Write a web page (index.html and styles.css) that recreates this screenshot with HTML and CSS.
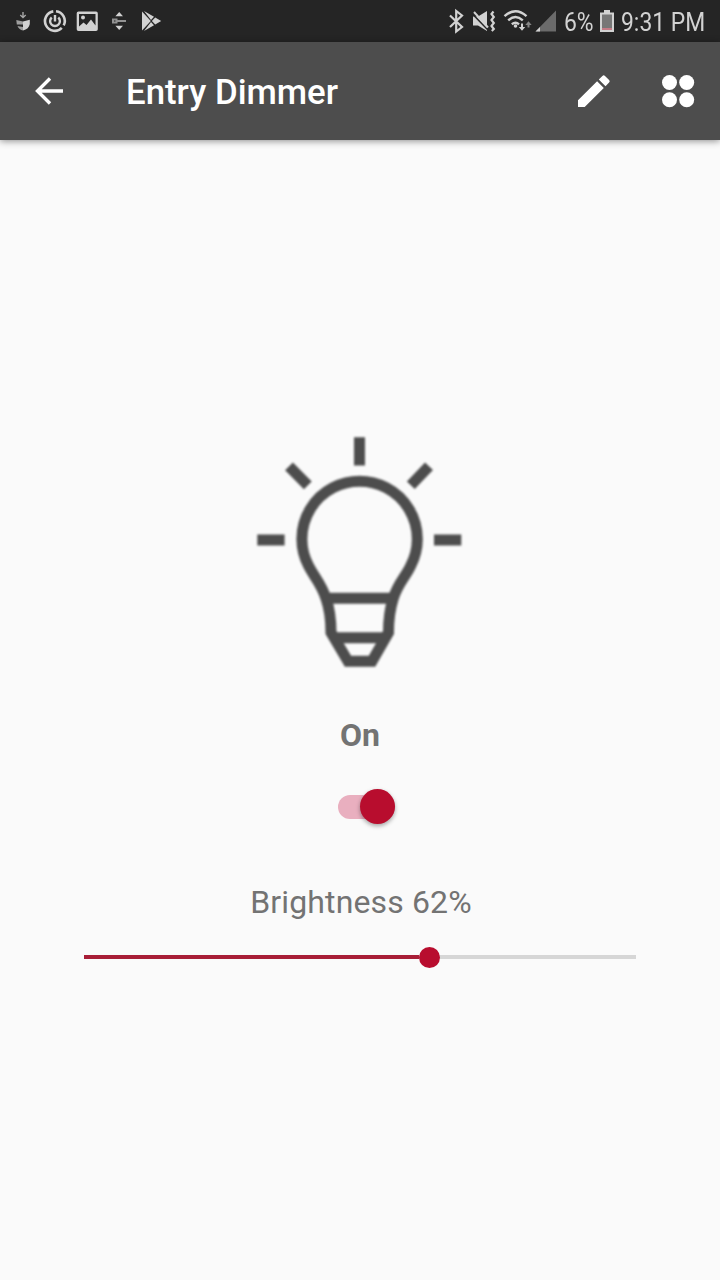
FILE: index.html
```html
<!DOCTYPE html>
<html lang="en">

<head>
    <meta charset="UTF-8">
    <meta name="viewport" content="width=device-width, initial-scale=1.0">
    <title>Entry Dimmer</title>
    <link rel="stylesheet" href="styles.css">
</head>

<body>
    <div class="status-bar">
        <!-- Notifications -->
        <svg class="notifications" width="180" height="42" viewBox="0 0 180 42" fill="#d2d2d2">
            <path d="M22.300 12h1.400v4l1.600-1.400.9 1-3.200 3-3.200-3 .9-1 1.600 1.400z" opacity=".75" />
            <path d="M23 21.500l6.800-1.700v4.200c-.5 3.500-3 5.500-6.800 6.500z" />
            <path d="M16.300 20l6.700 1.500v3h-6.200zM17.500 26l5.500 1v3.500c-2.500-.6-4.500-2-5.500-4.500z" opacity=".7" />
            <path d="M56 11.250a9.800 9.800 0 0 1 7.700 14.200M61.800 27.900a9.800 9.800 0 1 1-8.500-16.550" fill="none" stroke="#d2d2d2" stroke-width="2.600" />
            <path d="M51.700 17.500a4.900 4.900 0 1 0 6.600 0M55 15v6.500" fill="none" stroke="#d2d2d2" stroke-width="2.400" />
            <path fill-rule="evenodd" d="M78.500 11.500h17.500a1.800 1.800 0 0 1 1.800 1.800v15.900a1.800 1.800 0 0 1-1.800 1.800h-17.500a1.800 1.800 0 0 1-1.800-1.800v-15.900a1.800 1.800 0 0 1 1.800-1.800zM79 14v12.500l4.500-4 3 2.500 4.500-5.500 4.500 6v-11.500z" />
            <circle cx="83" cy="17.500" r="2" />
            <path d="M119.200 12l3.800 4.200h-7.600zM119.200 30l3.800-4.200h-7.600z" />
            <path d="M113 19.500h3.500v3h-3.500zM117.500 21h8.500" fill="none" stroke="#929292" stroke-width="2" />
            <path d="M142 11.500l8.800 9.500-8.800 9.500zM144 11l10 5.700-3 3.200zM144 31l10-5.700-3-3.200zM155.200 17.400l6 3.600-6 3.600-3.300-3.600z" />
        </svg>
        <!-- Bluetooth, sound, wifi and signal -->
        <svg class="signals" width="118" height="42" viewBox="442 0 118 42" fill="#d2d2d2">
            <path d="M450 15.500l12 11.500-5.800 4.500v-20.500l5.800 4.500-12 11.500" fill="none" stroke="#d2d2d2" stroke-width="2.200" />
            <path d="M473 16.500h5l9-5.500v20l-9-5.500h-5z" />
            <path d="M472.500 14l15 15.500" stroke="#252525" stroke-width="1.600" />
            <path d="M474 12l14 15.500" stroke="#d2d2d2" stroke-width="2" />
            <path d="M493.500 11.500l-2 2.500 2.300 3-2.300 3 2.300 3-2.300 3 2.300 3-2 2" fill="none" stroke="#d2d2d2" stroke-width="2.200" />
            <path d="M504.500 16.200q11-10 22 0M508.200 20.400q7.300-6.600 14.600 0M511.800 24.300q3.800-3 7.200 0" fill="none" stroke="#d2d2d2" stroke-width="2.400" />
            <circle cx="515.500" cy="26" r="1.800" />
            <path d="M521 23.500h2v3.500h2.200l-3.200 3.800-3.200-3.800h2.200z" />
            <path d="M527.500 27.500h2v-2.500h2.200l-3.200-3.700-3.200 3.700h2.200z" fill="#858585" />
            <path d="M556 10.500v21h-20.500z" fill="#6b6b6b" />
            <path d="M540 27v4.500h-4.500z" />
        </svg>
        <span class="status-text percent">6%</span>
        <svg class="battery" width="14" height="22" viewBox="0 0 14 22">
            <path d="M4 0h6v2.500h4v19.500h-14v-19.500h4z" fill="#d2d2d2" />
            <path d="M2 4.500h10v13.500h-10z" fill="#777" />
            <path d="M2 18h10v2h-10z" fill="#c47b86" />
        </svg>
        <span class="status-text clock">9:31 PM</span>
    </div>

    <header class="app-bar">
        <svg class="back" width="30" height="28" viewBox="0 0 30 28">
            <path d="M16 1.500l-12.500 12.500 12.500 12.500M3.500 14h25.500" />
        </svg>
        <h1>Entry Dimmer</h1>
        <svg class="edit" width="34" height="34" viewBox="0 0 34 34">
            <path d="M1 26.300v6.700h6.700l19.100-19.100-6.700-6.700zM21.800 5.500l3.600-3.600q1.300-1.300 2.600 0l4.100 4.100q1.300 1.300 0 2.600l-3.600 3.600z" />
        </svg>
        <svg class="scenes" width="34" height="34" viewBox="0 0 34 34">
            <circle cx="8.500" cy="8.500" r="7.500" />
            <circle cx="25.700" cy="8.500" r="7.500" />
            <circle cx="8.500" cy="25.700" r="7.500" />
            <circle cx="25.700" cy="25.700" r="7.500" />
        </svg>
    </header>

    <main class="device">
        <svg class="bulb" width="240" height="270" viewBox="0 0 240 270">
            <path d="M119.500 17.300v28.300M17.300 120h27.300M194 120h27.300M49 46.300l18.800 19M189 46.300l-18.200 19" />
            <path d="M86 178.500C81 163 74 157 68.500 145.700A57.700 57.700 0 1 1 170.700 145.700C165.500 157 158 163 153.200 178.500C149.500 190 148.500 200 148.500 212.500L132 241.300H108L91 212.500C91 200 90 190 86 178.500z" />
            <path d="M87 178.300h65M94 217.800h52" />
        </svg>
        <p class="state">On</p>
        <div class="switch">
            <div class="switch-thumb"></div>
        </div>
        <p class="label">Brightness 62%</p>
        <div class="slider">
            <div class="slider-fill"></div>
            <div class="slider-thumb"></div>
        </div>
    </main>
</body>

</html>
```
FILE: styles.css
```css
body {
    font-family: Roboto, Arial, sans-serif;
    margin: 0;
    height: 1280px;
    background-color: #fafafa;
    color: #737373;
    overflow: hidden;
}

svg {
    display: block;
    flex: none;
}

/* Status bar */
.status-bar {
    display: flex;
    align-items: center;
    height: 42px;
    background-color: #252525;
}

.signals {
    margin-left: 262px;
}

.status-text {
    font-size: 26px;
    line-height: 42px;
    color: #d2d2d2;
    white-space: nowrap;
    transform-origin: left center;
    transform: scaleX(0.88);
}

.percent {
    width: 35px;
    margin-left: 4px;
    padding-top: 2px;
}

.battery {
    margin-left: 1px;
}

.clock {
    margin-left: 7px;
    padding-top: 2px;
}

/* App bar */
.app-bar {
    display: flex;
    align-items: center;
    box-sizing: border-box;
    height: 98px;
    padding: 0 25px 0 34px;
    background-color: #4d4d4d;
    color: #fff;
    box-shadow: 0 1px 7px rgba(0, 0, 0, 0.45);
}

.app-bar h1 {
    flex: 1;
    margin: 2px 0 0 62px;
    font-size: 34.8px;
    font-weight: 500;
}

.back {
    fill: none;
    stroke: #fff;
    stroke-width: 3.4;
}

.edit,
.scenes {
    fill: #fff;
}

.scenes {
    margin-left: 50px;
}

/* Device */
.device {
    display: flex;
    flex-direction: column;
    align-items: center;
    padding-top: 280px;
}

.bulb {
    fill: none;
    stroke: #4d4d4d;
    stroke-width: 11;
    filter: blur(1.2px);
}

.state {
    margin: 26px 0 0;
    font-size: 32px;
    font-weight: bold;
    line-height: 38px;
}

.switch {
    display: flex;
    align-items: center;
    justify-content: flex-end;
    width: 57px;
    height: 24px;
    margin: 41px 0 0 13px;
    border-radius: 12px;
    background-color: #e9afbf;
}

.switch-thumb {
    flex: none;
    width: 35px;
    height: 35px;
    margin-bottom: 1px;
    border-radius: 50%;
    background-color: #b80d2e;
    box-shadow: 0 2px 4px rgba(0, 0, 0, 0.35);
}

.label {
    margin: 64px 0 0 2px;
    font-size: 32px;
    line-height: 38px;
    letter-spacing: 0.13px;
}

.slider {
    display: flex;
    align-items: center;
    width: 552px;
    height: 4px;
    margin-top: 34px;
    background-color: #d6d6d6;
}

.slider-fill {
    width: 335px;
    height: 4px;
    background-color: #a81e37;
}

.slider-thumb {
    flex: none;
    width: 21px;
    height: 21px;
    border-radius: 50%;
    background-color: #b80d2e;
}
```
